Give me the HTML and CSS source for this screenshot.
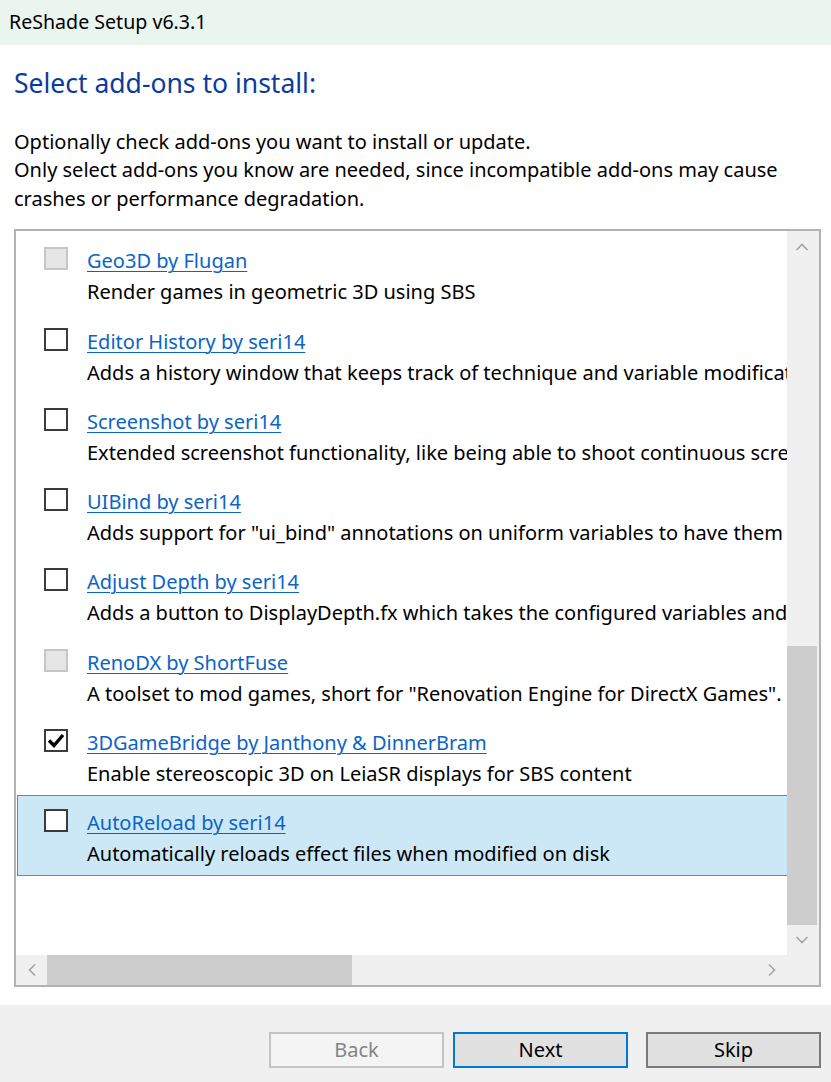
FILE: index.html
```html
<!DOCTYPE html>
<html lang="en">
<head>
<meta charset="utf-8">
<title>ReShade Setup v6.3.1</title>
<link rel="stylesheet" href="styles.css">
</head>
<body>
<div class="window">
  <div class="titlebar">ReShade Setup v6.3.1</div>
  <div class="content">
    <h1 class="heading">Select add-ons to install:</h1>
    <p class="intro">Optionally check add-ons you want to install or update.<br>Only select add-ons you know are needed, since incompatible add-ons may cause crashes or performance degradation.</p>
    <div class="listbox">
      <div class="viewport">
        <div class="items">
          <div class="item">
            <span class="check disabled"></span>
            <div class="text"><a class="link">Geo3D by Flugan</a><div class="desc">Render games in geometric 3D using SBS</div></div>
          </div>
          <div class="item">
            <span class="check"></span>
            <div class="text"><a class="link">Editor History by seri14</a><div class="desc">Adds a history window that keeps track of technique and variable modifications made in the editor.</div></div>
          </div>
          <div class="item">
            <span class="check"></span>
            <div class="text"><a class="link">Screenshot by seri14</a><div class="desc">Extended screenshot functionality, like being able to shoot continuous screenshots.</div></div>
          </div>
          <div class="item">
            <span class="check"></span>
            <div class="text"><a class="link">UIBind by seri14</a><div class="desc">Adds support for "ui_bind" annotations on uniform variables to have them automatically bound.</div></div>
          </div>
          <div class="item">
            <span class="check"></span>
            <div class="text"><a class="link">Adjust Depth by seri14</a><div class="desc">Adds a button to DisplayDepth.fx which takes the configured variables and sets them globally.</div></div>
          </div>
          <div class="item">
            <span class="check disabled"></span>
            <div class="text"><a class="link">RenoDX by ShortFuse</a><div class="desc">A toolset to mod games, short for "Renovation Engine for DirectX Games". Only for supported games.</div></div>
          </div>
          <div class="item">
            <span class="check"><svg viewBox="0 0 20 19" width="20" height="19"><path d="M3 9.5 L8 14.5 L17 4" fill="none" stroke="#000" stroke-width="3.4"/></svg></span>
            <div class="text"><a class="link">3DGameBridge by Janthony &amp; DinnerBram</a><div class="desc">Enable stereoscopic 3D on LeiaSR displays for SBS content</div></div>
          </div>
          <div class="item selected">
            <span class="check"></span>
            <div class="text"><a class="link">AutoReload by seri14</a><div class="desc">Automatically reloads effect files when modified on disk</div></div>
          </div>
        </div>
      </div>
      <div class="vscroll">
        <div class="sbtn"><svg viewBox="0 0 14 10" width="14" height="10"><path d="M1.5 8 L7 2.5 L12.5 8" fill="none" stroke="#a3a3a3" stroke-width="1.6"/></svg></div>
        <div class="spacer"></div>
        <div class="vthumb"></div>
        <div class="sbtn down"><svg viewBox="0 0 14 10" width="14" height="10"><path d="M1.5 2 L7 7.5 L12.5 2" fill="none" stroke="#a3a3a3" stroke-width="1.6"/></svg></div>
      </div>
      <div class="hscroll">
        <div class="sbtn h"><svg viewBox="0 0 10 14" width="10" height="14"><path d="M8 1.5 L2.5 7 L8 12.5" fill="none" stroke="#a3a3a3" stroke-width="1.6"/></svg></div>
        <div class="hthumb"></div>
        <div class="spacer"></div>
        <div class="sbtn h"><svg viewBox="0 0 10 14" width="10" height="14"><path d="M2 1.5 L7.5 7 L2 12.5" fill="none" stroke="#a3a3a3" stroke-width="1.6"/></svg></div>
      </div>
      <div class="corner"></div>
    </div>
  </div>
  <div class="footer">
    <button class="btn back" disabled>Back</button>
    <button class="btn next">Next</button>
    <button class="btn skip">Skip</button>
  </div>
</div>
</body>
</html>
```
FILE: styles.css
```css
html, body {
  margin: 0;
  padding: 0;
  background: #ffffff;
}
body {
  font-family: "Noto Sans", "Open Sans", sans-serif;
  color: #000;
}
.window {
  width: 831px;
  height: 1082px;
  display: flex;
  flex-direction: column;
  overflow: hidden;
}
.titlebar {
  height: 45px;
  flex: none;
  background: #eaf5f0;
  padding-left: 9px;
  font-size: 19.6px;
  line-height: 44px;
  box-sizing: border-box;
}
.content {
  padding: 0 10px 0 14px;
}
.heading {
  margin: 20px 0 0 0;
  font-weight: normal;
  font-size: 26.5px;
  line-height: 36px;
  color: #0c3b9e;
}
.intro {
  margin: 27px 0 0 0;
  font-size: 20px;
  line-height: 28.4px;
  width: 800px;
}
.listbox {
  margin-top: 16px;
  width: 807px;
  height: 758px;
  box-sizing: border-box;
  border: 2px solid #b2b2b2;
  display: grid;
  grid-template-columns: 1fr 32px;
  grid-template-rows: 1fr 30px;
}
.viewport {
  overflow: hidden;
  background: #fff;
  padding-left: 1px;
}
.items {
  padding-top: 2px;
  width: 1400px;
}
.item {
  height: 80.3px;
  box-sizing: border-box;
  border: 1px solid transparent;
  display: flex;
  align-items: flex-start;
  padding-top: 11px;
  white-space: nowrap;
}
.item.selected {
  background: #cce8f6;
  border-color: #2b9ee0;
}
.check {
  flex: none;
  width: 20px;
  height: 19px;
  border: 2px solid #3c3c3c;
  background: #fff;
  margin: 2px 0 0 26px;
  display: flex;
}
.check.disabled {
  border-color: #c6c6c6;
  background: #e6e6e6;
}
.text {
  margin-left: 19px;
  font-size: 20px;
  line-height: 31px;
}
.link {
  color: #0a64c8;
  text-decoration: underline;
  text-underline-offset: 3px;
  text-decoration-thickness: 1px;
}
.desc {
  color: #000;
}
.vscroll {
  background: #f0f0f0;
  display: flex;
  flex-direction: column;
  padding-right: 2px;
}
.sbtn {
  height: 31px;
  flex: none;
  display: flex;
  align-items: center;
  justify-content: center;
}
.sbtn.down {
  height: 30px;
}
.sbtn.h {
  width: 31px;
  height: auto;
}
.spacer {
  flex: 1;
}
.vthumb {
  height: 279px;
  background: #cdcdcd;
  flex: none;
}
.hscroll {
  background: #f0f0f0;
  display: flex;
  flex-direction: row;
}
.hthumb {
  width: 305px;
  background: #cdcdcd;
  flex: none;
}
.corner {
  background: #f0f0f0;
}
.footer {
  margin-top: 18px;
  flex: 1;
  background: #f0f0f0;
  display: flex;
  justify-content: flex-end;
  align-items: flex-start;
  padding: 27px 10px 0 0;
}
.btn {
  width: 175px;
  height: 36px;
  box-sizing: border-box;
  font-family: "Noto Sans", "Open Sans", sans-serif;
  font-size: 20px;
  line-height: 1;
  padding: 0;
  background: #e1e1e1;
  color: #000;
  border: 2px solid #7a7a7a;
}
.btn.back {
  background: #f4f4f4;
  color: #848484;
  border-color: #c4c4c4;
}
.btn.next {
  margin-left: 9px;
  border-color: #0078d7;
}
.btn.skip {
  margin-left: 18px;
}
```
